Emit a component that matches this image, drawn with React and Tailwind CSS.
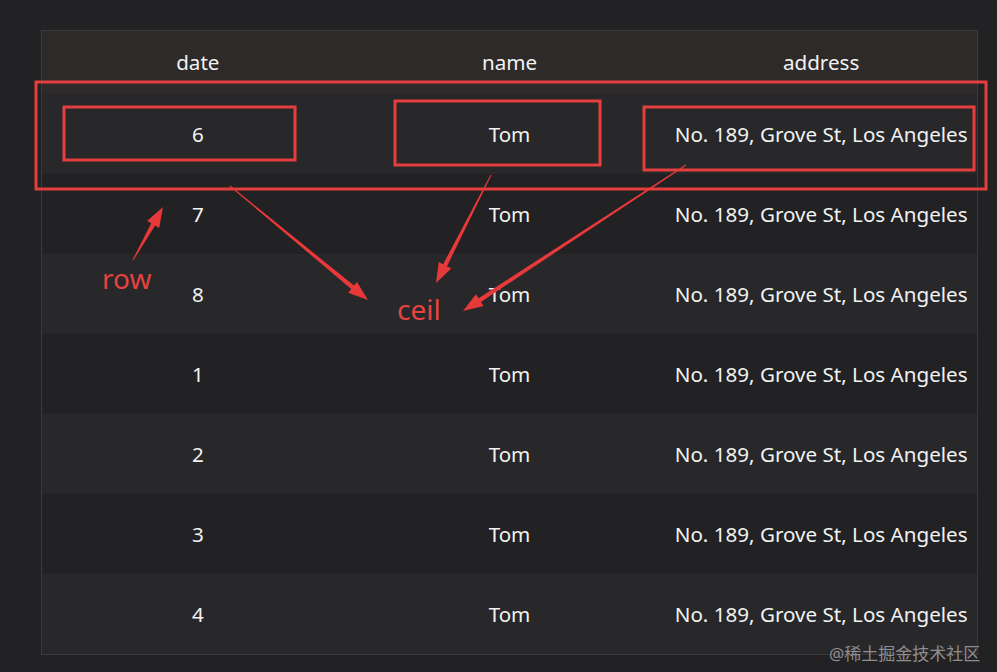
const rows = ["6", "7", "8", "1", "2", "3", "4"];

const arrows = [
  [230, 186, 368, 300],
  [491, 175, 436, 283],
  [686, 165, 463, 311],
  [133, 260, 163, 207],
];

function arrowPoints([x1, y1, x2, y2]) {
  const dx = x2 - x1;
  const dy = y2 - y1;
  const len = Math.hypot(dx, dy);
  const ux = dx / len;
  const uy = dy / len;
  const nx = -uy;
  const ny = ux;
  const head = 20;
  const bx = x2 - ux * head;
  const by = y2 - uy * head;
  const p = (x, y) => `${x.toFixed(1)},${y.toFixed(1)}`;
  return [
    p(x1 + nx * 0.5, y1 + ny * 0.5),
    p(bx + nx * 2.2, by + ny * 2.2),
    p(bx + nx * 7, by + ny * 7),
    p(x2, y2),
    p(bx - nx * 7, by - ny * 7),
    p(bx - nx * 2.2, by - ny * 2.2),
    p(x1 - nx * 0.5, y1 - ny * 0.5),
  ].join(" ");
}

export default function App() {
  return (
    <div
      className="relative w-[997px] h-[672px] overflow-hidden bg-[#222123] pt-[30px] pl-[41px]"
      style={{ fontFamily: '"Noto Sans", "Open Sans", sans-serif' }}
    >
      <div className="w-[937px] border border-[#3a393b] text-[20.6px] text-[#f2f2f2]">
        <div className="grid grid-cols-3 h-[63px] items-center text-center bg-[#2d2a29]">
          <div>date</div>
          <div>name</div>
          <div>address</div>
        </div>
        {rows.map((d, i) => (
          <div
            key={i}
            className={
              "grid grid-cols-3 h-[80px] items-center text-center pt-[1px] " +
              (i % 2 === 0 ? "bg-[#28272a]" : "bg-[#222123]")
            }
          >
            <div>{d}</div>
            <div>Tom</div>
            <div className="whitespace-nowrap">No. 189, Grove St, Los Angeles</div>
          </div>
        ))}
      </div>

      <svg className="absolute inset-0 pointer-events-none" width="997" height="672">
        <g fill="none" stroke="#e53e3e" strokeWidth="3">
          <rect x="36" y="82" width="950" height="107" />
          <rect x="64" y="107" width="231" height="53" />
          <rect x="395" y="101" width="205" height="64" />
          <rect x="644" y="107" width="330" height="63" />
        </g>
        <g fill="#e8393a">
          {arrows.map((a, i) => (
            <polygon key={i} points={arrowPoints(a)} />
          ))}
        </g>
      </svg>

      <div className="absolute left-[102px] top-[264px] text-[28px] leading-none text-[#e5433f]">row</div>
      <div className="absolute left-[397px] top-[295px] text-[28px] leading-none text-[#e5433f]">ceil</div>
      <div
        className="absolute left-[829px] top-[645px] text-[17px] leading-none text-[#8e8d90] whitespace-nowrap"
        style={{ fontFamily: '"Noto Sans", "Noto Sans CJK SC", sans-serif' }}
      >
        @稀土掘金技术社区
      </div>
    </div>
  );
}
